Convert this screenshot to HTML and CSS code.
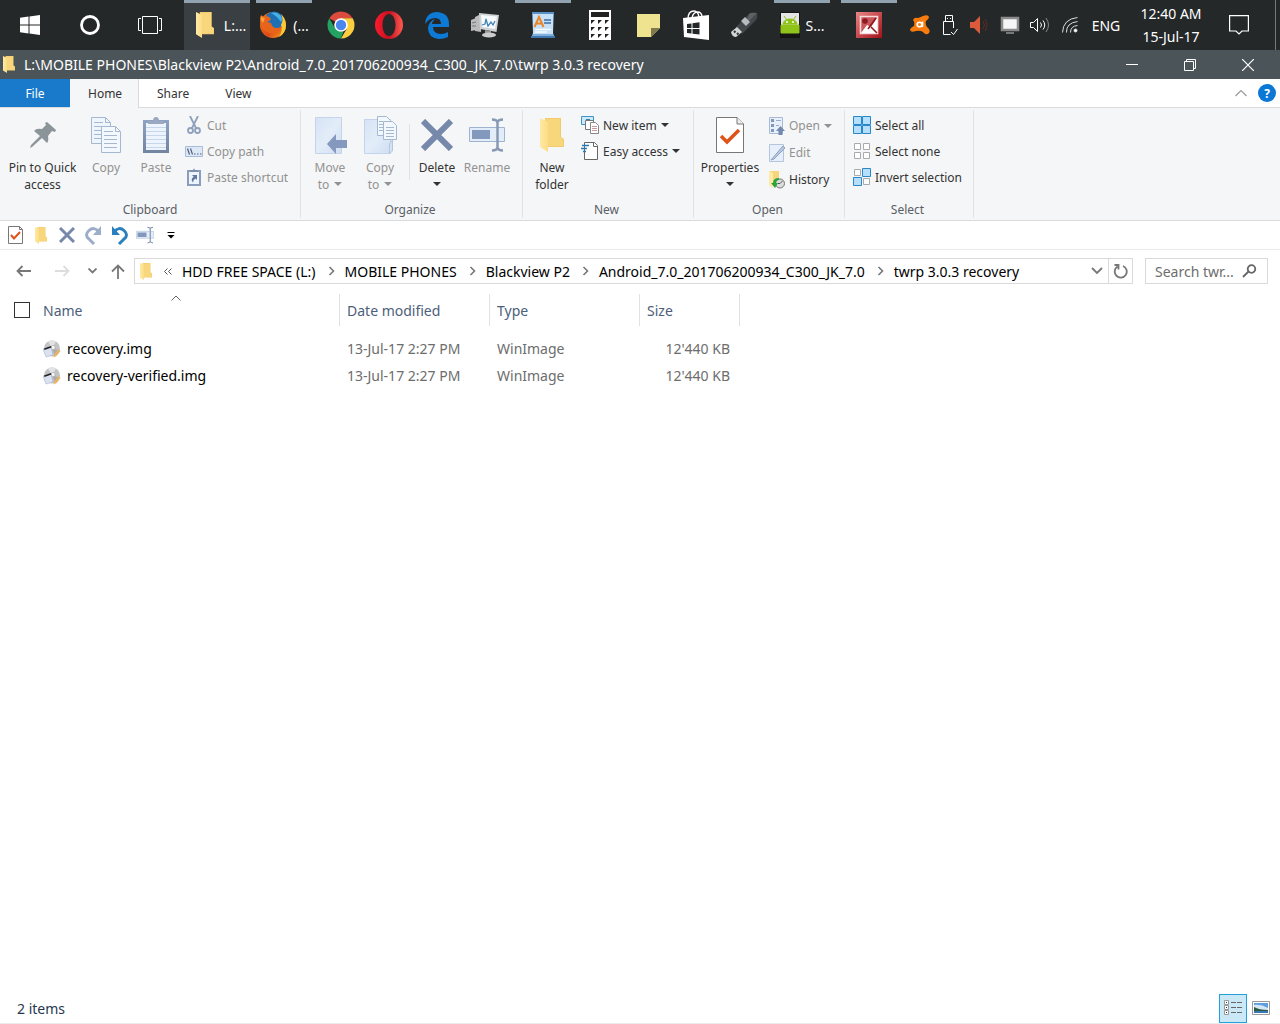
FILE: index.html
```html
<!DOCTYPE html>
<html lang="en">
<head>
  <meta charset="utf-8">
  <title>twrp 3.0.3 recovery</title>
  <link rel="stylesheet" href="styles.css">
</head>
<body>
  <!-- shared icons -->
  <svg class="defs" width="0" height="0">
    <defs>
      <linearGradient id="gFlap" x1="0" x2="1"><stop offset="0" stop-color="#ffe9a6"/><stop offset="1" stop-color="#fbdd85"/></linearGradient>
      <linearGradient id="gBlue" x1="0" x2="1" y2="1"><stop offset="0" stop-color="#d6e3f5"/><stop offset=".5" stop-color="#e3edf9"/><stop offset="1" stop-color="#cfdef2"/></linearGradient>
      <linearGradient id="gOpera" x1="0" x2="1"><stop offset="0" stop-color="#ff1b2d"/><stop offset=".5" stop-color="#c4101f"/><stop offset="1" stop-color="#ff5a50"/></linearGradient>
      <linearGradient id="gFox" x1="0" x2="1" y2="1"><stop offset="0" stop-color="#f27a1d"/><stop offset=".6" stop-color="#dd4a17"/><stop offset="1" stop-color="#f9b024"/></linearGradient>
      <linearGradient id="gRed" x1="0" x2="1" y2="1"><stop offset="0" stop-color="#e98585"/><stop offset="1" stop-color="#a31119"/></linearGradient>
      <linearGradient id="gClip" x1="0" y1="0" x2="0" y2="1"><stop offset="0" stop-color="#8ea2c4"/><stop offset="1" stop-color="#71849f"/></linearGradient>
    </defs>
    <symbol id="folder" viewBox="0 0 24 34">
      <path d="M5 0h16v19l3 2v8H5z" fill="#f2cb6c"/>
      <path d="M6 1h14v18l3 2v7H6z" fill="#f8d67c"/>
      <path d="M0 0l8 4v30l-8-5z" fill="url(#gFlap)"/>
    </symbol>
    <symbol id="cross" viewBox="0 0 32 32">
      <path d="M2 2l28 28M30 2L2 30" stroke="#7689ab" stroke-width="6" fill="none"/>
    </symbol>
    <symbol id="rename" viewBox="0 0 36 34">
      <path d="M.5 9.500h35v14H.5z" fill="#e3edf9" stroke="#9fb3d0"/>
      <path d="M3 12h18v9H3z" fill="#8398bd"/>
      <path d="M23 1.500q5 0 5.500 3q.5-3 5.500-3M28.500 4v26M23 32.500q5 0 5.500-3q.5 3 5.500 3" fill="none" stroke="#8799b4" stroke-width="2.500"/>
    </symbol>
    <symbol id="props" viewBox="0 0 28 36">
      <path d="M.5.5H21l6.500 6.500v28.500H.5z" fill="#fff" stroke="#777"/>
      <path d="M21 .5V7h6.500" fill="#eee" stroke="#777"/>
      <path d="M5 19l6 6L23 13" fill="none" stroke="#dd5318" stroke-width="3.500"/>
    </symbol>
    <symbol id="props-small" viewBox="0 0 15 18">
      <path d="M.5.500h11l3 3v14H.5z" fill="#fff" stroke="#777"/>
      <path d="M11.500.500v3h3" fill="none" stroke="#777"/>
      <path d="M3 9l3 3.500L12 6" fill="none" stroke="#dd5318" stroke-width="2"/>
    </symbol>
    <symbol id="disc" viewBox="0 0 18 18">
      <circle cx="9" cy="8.500" r="8" fill="#c2c3c5"/>
      <path d="M9 8.500L5 1.500a8 8 0 0 1 8 0z" fill="#e2e3e5"/>
      <path d="M9 8.500l8 2a8 8 0 0 1-5 5z" fill="#aaabaf"/>
      <circle cx="10" cy="7.500" r="2.200" fill="#f4f4f4" stroke="#999" stroke-width=".5"/>
      <path d="M0 9l8-2 2 8-7 2z" fill="#dbe1f0" stroke="#a9b3cb" stroke-width=".6"/>
      <path d="M1 8.500l7-2.500.5 1.500L1.500 10z" fill="#222"/>
      <path d="M15.500 9l2 2-4 5-3 1.500.5-3z" fill="#e6b465"/>
    </symbol>
    <symbol id="chev" viewBox="0 0 8 12">
      <path d="M1.500 2L5.500 6l-4 4" fill="none" stroke="#777" stroke-width="1.600"/>
    </symbol>
  </svg>

  <nav class="taskbar">
    <button class="task wide" aria-label="Start"><svg width="20" height="20" viewBox="0 0 20 20" fill="#fff"><path d="M0 2.800l8.500-1.200v8H0zM9.500 1.500L20 0v9.600H9.500zM0 10.500h8.500v8L0 17.300zM9.500 10.500H20V20L9.500 18.600z"/></svg></button>
    <button class="task wide" aria-label="Cortana"><svg width="20" height="20" viewBox="0 0 20 20"><circle cx="10" cy="10" r="8.500" fill="none" stroke="#fff" stroke-width="2.800"/></svg></button>
    <button class="task wide" aria-label="Task View"><svg width="24" height="20" viewBox="0 0 24 20" fill="none" stroke="#fff"><path d="M4.500 1.500h15v17h-15zM3 3.500H.5v12H3M21 3.500h2.500v12H21"/></svg></button>
    <button class="task running active"><svg width="18" height="26" viewBox="0 0 24 34" preserveAspectRatio="none"><use href="#folder"/></svg><span>L:...</span></button>
    <button class="task running"><svg width="28" height="28" viewBox="0 0 28 28">
      <circle cx="14" cy="14" r="13" fill="url(#gFox)"/>
      <circle cx="15" cy="10" r="9.500" fill="#1f6fb5"/>
      <path d="M12 2q6-2 10 3 2 3 0 6-4-6-10-9z" fill="#45b2e6"/>
      <path d="M22 3q5 5 5 11 0 8-7 12 4-6 2-12 3-5 0-11z" fill="#fbc935"/>
      <path d="M2 4q2 2 5 1 3 0 5 3-1 2-4 3l4 1q1 5 6 5 3 0 5-2-2 7-9 8Q5 22 2 14 0 9 2 4z" fill="#e8641b"/>
      <path d="M2 5q1 2 4 2L4 12q-3-3-2-7z" fill="#f8a13a"/></svg><span>(...</span></button>
    <button class="task" aria-label="Chrome"><svg width="28" height="28" viewBox="0 0 28 28">
      <path d="M14 14L2.300 7.200A13.600 13.600 0 0 1 25.700 7.200H14z" fill="#dd4b3e"/>
      <path d="M14 14V7.200h11.700A13.600 13.600 0 0 1 14 27.600L19.900 17.400z" fill="#fccd3f"/>
      <path d="M2.300 7.200L8.100 17.400 14 20.800l2.500-.5L14 27.600A13.600 13.600 0 0 1 2.300 7.200z" fill="#23a261"/>
      <circle cx="14" cy="14" r="6.800" fill="#fff"/><circle cx="14" cy="14" r="5.200" fill="#4a86ee"/></svg></button>
    <button class="task" aria-label="Opera"><svg width="28" height="28" viewBox="0 0 28 28"><path fill="url(#gOpera)" fill-rule="evenodd" d="M14 0a14 14 0 1 0 0 28a14 14 0 1 0 0-28zM14 3c4 0 6.500 5 6.500 11S18 25 14 25 7.500 20 7.500 14 10 3 14 3z"/></svg></button>
    <button class="task" aria-label="Edge"><svg width="26" height="27" viewBox="0 0 26 27"><path fill="#0d7ad6" d="M1 12Q2 0 13.500 0 25 1 25 12v3H9q0 7 8 7 4 0 7-2v5q-4 2-9 2-11-1-11-11 1-7 7-9-3 3-3 5h9q0-6-6-6Q5 6 1 12z"/></svg></button>
    <button class="task" aria-label="Resource Monitor"><svg width="28" height="26" viewBox="0 0 28 26">
      <path d="M0 8l5-2v12l-5 1zM4 5l6-3v18l-6-1z" fill="#b9bbbd"/><path d="M1 11l4-1M1 14h4" stroke="#777"/>
      <path d="M8 1l20 2-2.500 17L9 17z" fill="#cfd1d2"/><path d="M10 3l16 1.500L24 17l-13-2z" fill="#f6fafd"/>
      <path d="M11 13l3-1 1-5 2 7 3-4 2 3 2-4" fill="none" stroke="#3f83b8" stroke-width="1.300"/>
      <path d="M14 18l6 1v3h-6z" fill="#999"/><ellipse cx="18" cy="23" rx="7" ry="2.500" fill="#ccc"/></svg></button>
    <button class="task running" aria-label="WordPad"><svg width="26" height="28" viewBox="0 0 26 28">
      <path d="M2 1h22l-1 21 2 5H1l2-5z" fill="#7fb1dc"/><path d="M2 1h22v2H2z" fill="#5b92c6"/><path d="M1 25h24v2H1z" fill="#3f77b0"/><path d="M3 3h20v20H3z" fill="#c9e1f6"/>
      <path d="M4.500 16L9 6l4.500 10M6 12.500h6" fill="none" stroke="#e98527" stroke-width="2"/>
      <path d="M14 9h7M14 12h7" stroke="#3b6fa7" stroke-width="1.600"/><path d="M5 18.500h16M5 21h12" stroke="#f5fbff" stroke-width="1.600"/></svg></button>
    <button class="task" aria-label="Calculator"><svg width="22" height="30" viewBox="0 0 22 30"><path d="M0 0h22v30H0z" fill="#fff"/><path d="M2 2h18v5H2zM2 10h4l-4 4zM9 10h4l-4 4zM16 10h4l-4 4zM2 17h4l-4 4zM9 17h4l-4 4zM16 17h4l-4 4zM2 24h4l-4 4zM9 24h4l-4 4zM16 24h4l-4 4z" fill="#222"/></svg></button>
    <button class="task" aria-label="Sticky Notes"><svg width="23" height="23" viewBox="0 0 23 23"><path d="M0 0h23v14l-9 9H0z" fill="#f0e38f"/><path d="M14 14h9l-9 9z" fill="#807950"/></svg></button>
    <button class="task" aria-label="Store"><svg width="26" height="30" viewBox="0 0 26 30"><path d="M0 8l26-3v25L1 27z" fill="#fff"/><path d="M5 9q0-8 6-8 4 0 5 6M9 8q1-6 6-6 3 0 4 4" fill="none" stroke="#fff" stroke-width="1.400"/><path d="M4 14l4.500-.6v4.600H4zM9.500 13.200l7-1v5.800h-7zM4 19h4.500v4.600L4 23zM9.500 19h7v5.500l-7-.8z" fill="#242829"/></svg></button>
    <button class="task" aria-label="USB drive"><svg width="28" height="26" viewBox="0 0 28 26"><path d="M6 15L19 2q2-2 8-1 1 5-1 7L12 22z" fill="#44474c"/><path d="M19 2q2-2 8-1L15 13z" fill="#5d6166"/><path d="M11 9l4-4 5 5-4 4z" fill="#b9bbbd"/><path d="M1 20l6-5 5 5-6 5q-4 0-5-5z" fill="#d4d5d6"/><path d="M4 20.500l1.500-1.500M7 22.500L8.500 21" stroke="#333" stroke-width="2"/></svg></button>
    <button class="task running"><svg width="20" height="26" viewBox="0 0 20 26"><path d="M0 0h20v26H0z" fill="#151515"/><path d="M1 1h18v12H1z" fill="#e5e5e5"/><path d="M1 13h18v8H1zM3 12q1-5 7-5t7 5zM4 4l3 4M16 4l-3 4" fill="#8fc31a" stroke="#8fc31a"/><circle cx="7" cy="10" r="1" fill="#fff"/><circle cx="13" cy="10" r="1" fill="#fff"/></svg><span>S...</span></button>
    <button class="task running" aria-label="Image viewer"><svg width="26" height="26" viewBox="0 0 26 26"><path d="M0 0h26v26H0z" fill="url(#gRed)"/><path d="M4.500 4.500h17v17h-17z" fill="#c9575c" stroke="#f7dcdc" stroke-width="1.600"/><path d="M5 21l6-8 4 2 6-9v15z" fill="#fff"/><path d="M12 17l8-11M15 15l6 6" stroke="#8d1b20" stroke-width="1.600"/><circle cx="9" cy="9" r="2.800" fill="#8d1b20"/></svg></button>

    <div class="tray">
      <button class="tray-btn" aria-label="Avast"><svg width="20" height="20" viewBox="0 0 20 20"><path d="M8 3q3-1 5-2 5-2 6 1 0 2-3 4-1 3 1 6 4 3 2 6-3 3-6-1-3-2-7-1-5 2-6-1 0-2 4-4 1-4-1-6 1-3 5-2z" fill="#f77c0d"/><circle cx="9.500" cy="9.500" r="2.300" fill="none" stroke="#fff" stroke-width="1.600"/><path d="M12.500 6.500V12" stroke="#fff" stroke-width="1.600"/></svg></button>
      <button class="tray-btn" aria-label="Eject"><svg width="16" height="21" viewBox="0 0 16 21" fill="none" stroke="#fff"><path d="M3.500 6.500v-6h7v6M11.500 13V6.500h-10v13h7M5 3.500h1M8 3.500h1M9 17l2.500 2.500L15.500 14"/></svg></button>
      <button class="tray-btn" aria-label="Sound manager"><svg width="20" height="20" viewBox="0 0 20 20"><path d="M0 7h4l6-6v18l-6-6H0z" fill="#db5a3c"/><path d="M13 6q3 4 0 8M15 4q4 6 0 12" fill="none" stroke="#5e2b24"/></svg></button>
      <button class="tray-btn" aria-label="Display"><svg width="20" height="18" viewBox="0 0 20 18"><path d="M2 2h16v12H2z" fill="#f6f6f6" stroke="#8b8b8b" stroke-width="2.500"/><path d="M6 16h8v2H6z" fill="#777"/></svg></button>
      <button class="tray-btn" aria-label="Volume"><svg width="20" height="16" viewBox="0 0 20 16" fill="none" stroke="#fff"><path d="M.5 5.500h3l4-4v13l-4-4h-3zM10.500 5.500q2 2.500 0 5M13 3.500q3.500 4.500 0 9"/><path d="M16 1q5 7 0 14" stroke="#888"/></svg></button>
      <button class="tray-btn" aria-label="Network"><svg width="16" height="16" viewBox="0 0 16 16" fill="none" stroke="#ddd"><path d="M.5 15.500Q1 2 15.500.5M4.500 15.500Q4 6 15.500 4.500M8.500 15.500q0-6.500 7-7"/><circle cx="13.500" cy="13.500" r="1.500" fill="#fff"/></svg></button>
      <button class="tray-btn lang">ENG</button>
      <button class="clock"><span>12:40 AM</span><span>15-Jul-17</span></button>
      <button class="notify" aria-label="Notifications"><svg width="20" height="20" viewBox="0 0 20 20" fill="none" stroke="#fff" stroke-width="1.200"><path d="M.6.600h18.800v15.400H13l-3 3-3-3H.6z"/></svg></button>
    </div>
  </nav>

  <header class="titlebar">
    <svg width="12" height="17" viewBox="0 0 24 34"><use href="#folder"/></svg>
    <h1>L:\MOBILE PHONES\Blackview P2\Android_7.0_201706200934_C300_JK_7.0\twrp 3.0.3 recovery</h1>
    <div class="win-controls">
      <button aria-label="Minimize"><svg width="12" height="12" viewBox="0 0 12 12"><path d="M0 5.500h12" stroke="#fff"/></svg></button>
      <button aria-label="Restore"><svg width="12" height="12" viewBox="0 0 12 12" fill="none" stroke="#fff"><path d="M.5 2.500h9v9h-9zM2.500 2.500v-2h9v9h-2"/></svg></button>
      <button aria-label="Close"><svg width="12" height="12" viewBox="0 0 12 12" stroke="#fff" stroke-width="1.200"><path d="M0 0l12 12M12 0L0 12"/></svg></button>
    </div>
  </header>

  <div class="tabs">
    <button class="tab file">File</button>
    <button class="tab current">Home</button>
    <button class="tab">Share</button>
    <button class="tab">View</button>
    <button class="collapse" aria-label="Collapse ribbon"><svg width="12" height="8" viewBox="0 0 12 8"><path d="M.5 7L6 1.500 11.500 7" fill="none" stroke="#999" stroke-width="1.200"/></svg></button>
    <button class="help" aria-label="Help">?</button>
  </div>

  <div class="ribbon">
    <section class="group clipboard">
      <div class="tools">
        <button class="big pin"><span class="pic"><svg width="26" height="26" viewBox="0 0 26 26" fill="#8b9599"><path d="M17 0l9 8-1 2-3-1-4 5q1 5-1 7l-5-5-10 9-2 1 1-3 9-9-6-5q2-3 8-2l4-4-1-2z"/></svg></span>Pin to Quick<br>access</button>
        <button class="big" disabled><span class="pic"><svg width="30" height="36" viewBox="0 0 30 36" stroke="#a6b7d0"><path d="M.5.500h14l5 5v21H.5z" fill="#eff5fd"/><path d="M14.500.500v5h5M3 5.500h9M3 9.500h13M3 13.500h13M3 17.500h13M3 21.500h13" fill="none"/><path d="M10.500 9.500h14l5 5v21h-19z" fill="#f3f8fe"/><path d="M24.500 9.500v5h5M13 14.500h9M13 18.500h13M13 22.500h13M13 26.500h13M13 30.500h13" fill="none"/></svg></span>Copy</button>
        <button class="big" disabled><span class="pic"><svg width="26" height="36" viewBox="0 0 26 36"><path d="M0 3h26v33H0z" fill="url(#gClip)"/><path d="M3 6h20v27H3z" fill="#edf4fd"/><path d="M3 10.500h20M3 14.500h20M3 18.500h20M3 22.500h20M3 26.500h20M3 30.500h20" stroke="#c6d6ec"/><path d="M5 7V4h5q0-4 3-4t3 4h5v3z" fill="#9aa9c0"/></svg></span>Paste</button>
        <div class="small-list">
          <button class="small" disabled><svg width="18" height="18" viewBox="0 0 18 18" fill="none" stroke="#8fa0bc" stroke-width="1.800"><path d="M5 0l6 12M13 0L7 12"/><circle cx="5.500" cy="14.500" r="2.500"/><circle cx="12.500" cy="14.500" r="2.500"/></svg>Cut</button>
          <button class="small" disabled><svg width="18" height="18" viewBox="0 0 18 18"><path d="M.5 4.500h17v10H.5z" fill="#dde8f7" stroke="#a9bcd8"/><path d="M2.500 6.500l2 6M5.500 6.500l2 6M9 12h1.500M12 12h1.500M15 12h1.500" stroke="#53617a" stroke-width="1.200"/></svg>Copy path</button>
          <button class="small" disabled><svg width="18" height="18" viewBox="0 0 18 18"><path d="M2 2h14v16H2z" fill="#8b9dbd"/><path d="M4 4h10v12H4z" fill="#edf4fd"/><path d="M5 4V2h3q1-3 2 0h3v2z" fill="#7f90ad"/><path d="M7 7h5v5l-1.500-1.500Q8 12 8 14.500 5 11 8.700 8.700z" fill="#6479a0"/></svg>Paste shortcut</button>
        </div>
      </div>
      <h2>Clipboard</h2>
    </section>

    <section class="group organize">
      <div class="tools">
        <button class="big" disabled><span class="pic"><svg width="34" height="38" viewBox="0 0 34 38"><path d="M2.500 1.500h26v36h-26z" fill="url(#gBlue)" stroke="#c4d4ea"/><path d="M14 28l9-10v6h11v8H23v6z" fill="#8499bd"/></svg></span>Move<br>to <i class="caret"></i></button>
        <button class="big" disabled><span class="pic"><svg width="34" height="38" viewBox="0 0 34 38"><path d="M1.500 3.500h26v34h-26z" fill="url(#gBlue)" stroke="#c4d4ea"/><path d="M26.500 37.500V28l3-4v11z" fill="#d5e2f4" stroke="#b5c7e0"/><path d="M14.500.500h9l4 4v15h-13z" fill="#f3f8fe" stroke="#a6b7d0"/><path d="M16 5.500h4M16 8.500h4M16 11.500h4M16 14.500h4" stroke="#a6b7d0"/><path d="M20.500 5.500h9l4 4v14h-13z" fill="#f3f8fe" stroke="#a6b7d0"/><path d="M23 11.500h8M23 14.500h8M23 17.500h8M23 20.500h8" stroke="#a6b7d0"/></svg></span>Copy<br>to <i class="caret"></i></button>
        <span class="rule"></span>
        <button class="big"><span class="pic"><svg width="32" height="32"><use href="#cross"/></svg></span>Delete<br><i class="caret down"></i></button>
        <button class="big" disabled><span class="pic"><svg width="36" height="34"><use href="#rename"/></svg></span>Rename</button>
      </div>
      <h2>Organize</h2>
    </section>

    <section class="group new">
      <div class="tools">
        <button class="big"><span class="pic"><svg width="24" height="34"><use href="#folder"/></svg></span>New<br>folder</button>
        <div class="small-list">
          <button class="small"><svg width="18" height="18" viewBox="0 0 18 18"><path d="M.5.500h12v8H.5z" fill="#cce8fa" stroke="#3e95c4"/><path d="M5 3h4v4H5z" fill="#3382ae"/><path d="M4.500 4.500h8v9h-8z" fill="#fff" stroke="#777"/><path d="M9.500 6.500h5l3 3v8h-8z" fill="#fff" stroke="#888"/><path d="M11 10.500h5M11 12.500h5M11 14.500h5" stroke="#cc98a0"/></svg>New item <i class="caret"></i></button>
          <button class="small"><svg width="18" height="18" viewBox="0 0 18 18"><path d="M3.500.500h10l3 3v14h-13z" fill="#fff" stroke="#666"/><path d="M12.500.500v4h4" fill="none" stroke="#666"/><path d="M1 3.500h7M0 6.500h6M2 9.500h3" stroke="#2979b5" stroke-width="1.400"/></svg>Easy access <i class="caret"></i></button>
        </div>
      </div>
      <h2>New</h2>
    </section>

    <section class="group open">
      <div class="tools">
        <button class="big props"><span class="pic"><svg width="28" height="36"><use href="#props"/></svg></span>Properties<br><i class="caret down"></i></button>
        <div class="small-list loose">
          <button class="small" disabled><svg width="16" height="18" viewBox="0 0 16 18"><path d="M.5.500h13v16H.5z" fill="#e7effa" stroke="#a9bad3"/><path d="M2 2h3v3H2zM2 7h3v3H2zM2 12h3v3H2z" fill="#8397ba"/><path d="M7 3.500h5M7 8.500h3" stroke="#9bacc8"/><path d="M7 14l4.500-5 4.500 5h-2.500v4h-4v-4z" fill="#7589ad"/></svg>Open <i class="caret"></i></button>
          <button class="small" disabled><svg width="16" height="18" viewBox="0 0 16 18"><path d="M.5.500h14v17H.5z" fill="#e7effa" stroke="#b4c4dc"/><path d="M2 16L14 2l2 2L5 15z" fill="#b8c8df" stroke="#8fa2c1"/></svg>Edit</button>
          <button class="small"><svg width="16" height="18" viewBox="0 0 16 18"><path d="M0 0h10v15H3l-3-1z" fill="#f6d57d"/><path d="M0 0l4 2v15l-4-3z" fill="#ffe9a6"/><circle cx="11" cy="12.500" r="4.500" fill="#ddd" stroke="#777"/><path d="M11 12.500l2.500-2.500M11 12.500H9" stroke="#555"/><path d="M10 7Q4 7 4 12H2l4 5 3-5H7q0-3 3-3z" fill="#2aa53a"/></svg>History</button>
        </div>
      </div>
      <h2>Open</h2>
    </section>

    <section class="group select">
      <div class="tools">
        <div class="small-list">
          <button class="small"><svg width="18" height="18" viewBox="0 0 18 18" fill="#b5dffc" stroke="#2b88c8"><path d="M.5.500h8v8h-8zM9.500.500h8v8h-8zM.5 9.500h8v8h-8zM9.500 9.500h8v8h-8z"/></svg>Select all</button>
          <button class="small"><svg width="18" height="18" viewBox="0 0 18 18" fill="#fff" stroke="#aaa"><path d="M1.500 1.500h6v6h-6zM10.500 1.500h6v6h-6zM1.500 10.500h6v6h-6zM10.500 10.500h6v6h-6z"/></svg>Select none</button>
          <button class="small"><svg width="18" height="18" viewBox="0 0 18 18"><path d="M1.500 1.500h6v6h-6zM10.500 10.500h6v6h-6z" fill="#fff" stroke="#aaa"/><path d="M9.500.500h8v8h-8zM.5 9.500h8v8h-8z" fill="#b5dffc" stroke="#2b88c8"/></svg>Invert selection</button>
        </div>
      </div>
      <h2>Select</h2>
    </section>
  </div>

  <div class="quickbar">
    <button aria-label="Properties"><svg width="15" height="18"><use href="#props-small"/></svg></button>
    <button aria-label="New folder"><svg width="12" height="17"><use href="#folder"/></svg></button>
    <button aria-label="Delete"><svg width="16" height="16"><use href="#cross"/></svg></button>
    <button aria-label="Redo"><svg width="17" height="19" viewBox="0 0 17 19"><path d="M14 6Q9 0 4 4.500T4 13l5 5" fill="none" stroke="#9cadc9" stroke-width="3"/><path d="M16 0v9H8z" fill="#9cadc9"/></svg></button>
    <button aria-label="Undo"><svg width="17" height="19" viewBox="0 0 17 19"><path d="M3 6q5-6 10-1.500T13 13l-5 5" fill="none" stroke="#2980be" stroke-width="3"/><path d="M1 0v9h8z" fill="#2980be"/></svg></button>
    <button aria-label="Rename"><svg width="18" height="18"><use href="#rename"/></svg></button>
    <button aria-label="Customize"><svg width="8" height="8" viewBox="0 0 8 8"><path d="M.5 1.500h7" stroke="#000"/><path d="M.5 4h7L4 7.500z"/></svg></button>
  </div>

  <div class="navbar">
    <button class="back" aria-label="Back"><svg width="15" height="12" viewBox="0 0 15 12" fill="none" stroke="#777" stroke-width="1.800"><path d="M15 6H1.500M6.500 1l-5 5 5 5"/></svg></button>
    <button class="forward" aria-label="Forward"><svg width="15" height="12" viewBox="0 0 15 12" fill="none" stroke="#ddd" stroke-width="1.800"><path d="M0 6h13.500M8.500 1l5 5-5 5"/></svg></button>
    <button class="recent" aria-label="Recent"><svg width="9" height="6" viewBox="0 0 9 6" fill="none" stroke="#777" stroke-width="1.800"><path d="M.5.500l4 4 4-4"/></svg></button>
    <button class="up-dir" aria-label="Up"><svg width="14" height="15" viewBox="0 0 14 15" fill="none" stroke="#777" stroke-width="1.800"><path d="M7 15V1.500M1 7.500l6-6 6 6"/></svg></button>
    <div class="address">
      <svg width="12" height="17" viewBox="0 0 24 34"><use href="#folder"/></svg>
      <svg class="more" width="8" height="7" viewBox="0 0 8 7" fill="none" stroke="#555"><path d="M3.500.500l-3 3 3 3M7.500.500l-3 3 3 3"/></svg>
      <button>HDD FREE SPACE (L:)</button>
      <svg class="sep" width="8" height="12"><use href="#chev"/></svg>
      <button>MOBILE PHONES</button>
      <svg class="sep" width="8" height="12"><use href="#chev"/></svg>
      <button>Blackview P2</button>
      <svg class="sep" width="8" height="12"><use href="#chev"/></svg>
      <button>Android_7.0_201706200934_C300_JK_7.0</button>
      <svg class="sep" width="8" height="12"><use href="#chev"/></svg>
      <button>twrp 3.0.3 recovery</button>
      <button class="drop" aria-label="Previous locations"><svg width="12" height="8" viewBox="0 0 12 8" fill="none" stroke="#777" stroke-width="1.800"><path d="M1 1l5 5 5-5"/></svg></button>
      <button class="refresh" aria-label="Refresh"><svg width="15" height="16" viewBox="0 0 15 16" fill="none" stroke="#777" stroke-width="1.800"><path d="M10 3a6 6 0 1 1-5.500.500M1.500 2h4v4.500"/></svg></button>
    </div>
    <label class="search">
      <input type="text" placeholder="Search twr..." aria-label="Search">
      <svg width="15" height="14" viewBox="0 0 15 14" fill="none" stroke="#666" stroke-width="1.800"><circle cx="9.500" cy="5" r="3.800"/><path d="M6.500 7.500L1 13"/></svg>
    </label>
  </div>

  <main>
    <table class="files">
      <thead>
        <tr>
          <th class="name"><div class="name-head"><input type="checkbox" aria-label="Select all items"><span>Name</span><svg class="sort" width="10" height="6" viewBox="0 0 10 6"><path d="M.5 5.500L5 1l4.500 4.500" fill="none" stroke="#666"/></svg></div></th>
          <th class="date">Date modified</th>
          <th class="type">Type</th>
          <th class="size">Size</th>
        </tr>
      </thead>
      <tbody>
        <tr>
          <td><div class="entry"><svg width="18" height="18"><use href="#disc"/></svg>recovery.img</div></td>
          <td>13-Jul-17 2:27 PM</td>
          <td>WinImage</td>
          <td>12'440 KB</td>
        </tr>
        <tr>
          <td><div class="entry"><svg width="18" height="18"><use href="#disc"/></svg>recovery-verified.img</div></td>
          <td>13-Jul-17 2:27 PM</td>
          <td>WinImage</td>
          <td>12'440 KB</td>
        </tr>
      </tbody>
    </table>
  </main>

  <footer class="status">
    <span class="count">2 items</span>
    <button class="view on" aria-label="Details view"><svg width="18" height="16" viewBox="0 0 18 16" fill="#fff"><path d="M.5.500h4v4h-4zM.5 5.500h4v4h-4zM.5 10.500h4v4h-4z" stroke="#999"/><path d="M2 2h1v1H2zM2 7h1v1H2zM2 12h1v1H2z" fill="#333"/><path d="M7 2.500h5M13 2.500h5M7 7.500h5M13 7.500h5M7 12.500h5M13 12.500h5" stroke="#666"/></svg></button>
    <button class="view" aria-label="Thumbnail view"><svg width="18" height="14" viewBox="0 0 18 14"><path d="M.5.500h17v13H.5z" fill="#fff" stroke="#999"/><path d="M2 2h14v10H2z" fill="#5f9fe0"/><path d="M2 4q7-1 14 3v2H2z" fill="#d5e7f2"/><path d="M2 6q5 3 14 3v1H2z" fill="#2b5a3f"/><path d="M2 10h14v2H2z" fill="#3878b5"/></svg></button>
  </footer>
</body>
</html>
```

FILE: styles.css
```css
* {
  box-sizing: border-box;
}
body {
  margin: 0;
  min-height: 100vh;
  display: flex;
  flex-direction: column;
  font-family: "Noto Sans", "Open Sans", sans-serif;
  font-size: 14px;
  color: #000;
  background-color: #fff;
}
button {
  font: inherit;
  color: inherit;
  background: none;
  border: none;
  padding: 0;
  white-space: nowrap;
}
svg {
  display: block;
  flex-shrink: 0;
}
.defs {
  position: absolute;
}

/* taskbar */
.taskbar {
  display: flex;
  height: 50px;
  background-color: #242829;
  color: #fff;
}
.task {
  width: 48px;
  display: flex;
  align-items: center;
  justify-content: center;
}
.task.wide {
  width: 60px;
}
.task.running {
  width: 56px;
  margin: 0 5px 0 6px;
  border-top: 3px solid #91a3b0;
  padding-bottom: 3px;
  gap: 6px;
}
.task.active {
  width: 66px;
  margin: 0 0 0 4px;
  padding-left: 8px;
  gap: 10px;
  background-color: #3a3f44;
}
.tray {
  margin-left: auto;
  margin-right: 4px;
  padding-right: 26px;
  border-right: 1px solid #777;
  display: flex;
  align-items: center;
}
.tray-btn {
  width: 30px;
  display: flex;
  justify-content: center;
}
.tray-btn.lang {
  width: 42px;
}
.clock {
  width: 88px;
  line-height: 23px;
}
.clock span {
  display: block;
}
.notify {
  margin-left: 14px;
}

/* title bar */
.titlebar {
  display: flex;
  align-items: center;
  height: 29px;
  padding-left: 3px;
  background-color: #4b5459;
  color: #fff;
}
.titlebar h1 {
  flex: 1;
  margin: 0 0 0 9px;
  font-size: 14px;
  font-weight: normal;
  white-space: nowrap;
}
.win-controls {
  display: flex;
  padding-right: 3px;
}
.win-controls button {
  width: 58px;
  display: flex;
  justify-content: center;
}

/* ribbon tabs */
.tabs {
  display: flex;
  align-items: center;
  height: 29px;
  font-size: 12px;
  color: #333;
  border-bottom: 1px solid #dadbdc;
}
.tab {
  height: 28px;
  padding: 0 18px;
}
.tab.file {
  width: 70px;
  background-color: #1979ca;
  color: #fff;
}
.tab.current {
  width: 69px;
  height: 29px;
  margin-bottom: -1px;
  background-color: #f5f6f7;
  border-right: 1px solid #dadbdc;
}
.collapse {
  margin-left: auto;
}
.help {
  width: 18px;
  height: 18px;
  margin: 0 4px 0 11px;
  border-radius: 50%;
  background-color: #0a78d4;
  color: #fff;
  font-weight: bold;
}

/* ribbon */
.ribbon {
  display: flex;
  padding: 2px 0;
  background-color: #f5f6f7;
  border-bottom: 1px solid #dadbdc;
  font-size: 12px;
  color: #333;
}
.group {
  padding: 2px 7px 0 4px;
  border-right: 1px solid #e0e2e4;
}
.group h2 {
  margin: 0;
  font-size: 12px;
  line-height: 17px;
  font-weight: normal;
  text-align: center;
  color: #5a5f66;
}
.tools {
  display: flex;
  align-items: flex-start;
  min-height: 89px;
}
.clipboard {
  min-width: 301px;
  padding-right: 4px;
}
.organize {
  min-width: 222px;
}
.new {
  min-width: 171px;
}
.open {
  min-width: 151px;
}
.select {
  min-width: 129px;
}
.big {
  width: 50px;
  padding-top: 3px;
  line-height: 17px;
}
.big.pin {
  width: 77px;
}
.big.props {
  width: 64px;
}
.pic {
  height: 44px;
  display: flex;
  align-items: center;
  justify-content: center;
  padding-bottom: 4px;
}
.ribbon button:disabled {
  color: #929292;
}
.small-list {
  margin-left: 4px;
  display: flex;
  flex-direction: column;
}
.small {
  display: flex;
  align-items: center;
  gap: 4px;
  height: 26px;
}
.small-list.loose {
  margin-left: 7px;
}
.loose .small {
  height: 27px;
}
.caret {
  display: inline-block;
  vertical-align: 3px;
  margin-left: 2px;
  border: 4px solid transparent;
  border-top-color: currentColor;
  border-bottom: none;
}
.small .caret {
  margin-left: 0;
}
.caret.down {
  margin-left: 0;
}
.rule {
  width: 1px;
  height: 56px;
  margin: 12px 2px 0 4px;
  background-color: #e0e2e4;
}

/* quick access */
.quickbar {
  display: flex;
  align-items: center;
  height: 29px;
  padding-left: 2px;
  border-bottom: 1px solid #ebebeb;
}
.quickbar button {
  width: 26px;
  display: flex;
  justify-content: center;
}

/* address row */
.navbar {
  display: flex;
  align-items: center;
  padding: 8px 12px 6px 16px;
}
.forward {
  margin-left: 24px;
}
.recent {
  margin-left: 18px;
}
.up-dir {
  margin: 0 9px 0 14px;
}
.address {
  flex: 1;
  display: flex;
  align-items: center;
  height: 26px;
  border: 1px solid #d9d9d9;
  padding-left: 5px;
}
.more {
  margin: 0 10px 0 12px;
}
.sep {
  margin: 0 9px 0 12px;
}
.drop {
  margin-left: auto;
}
.refresh {
  width: 24px;
  height: 24px;
  margin-left: 5px;
  display: flex;
  align-items: center;
  justify-content: center;
  border-left: 1px solid #d9d9d9;
}
.search {
  width: 123px;
  height: 26px;
  margin-left: 12px;
  padding: 0 10px 0 9px;
  display: flex;
  align-items: center;
  border: 1px solid #d9d9d9;
}
.search input {
  flex: 1;
  min-width: 0;
  padding: 0;
  border: none;
  outline: none;
  font: inherit;
}
.search input::placeholder {
  color: #6d6d6d;
}

/* file list */
main {
  flex: 1;
  padding-top: 4px;
}
.files {
  border-collapse: separate;
  border-spacing: 0;
  table-layout: fixed;
  width: 740px;
}
.files th {
  height: 32px;
  padding: 0 7px;
  text-align: left;
  font-weight: normal;
  color: #4c607a;
  border-right: 1px solid #e2e2e2;
}
.files th.name {
  width: 340px;
  padding: 0 0 0 14px;
}
.date,
.type {
  width: 150px;
}
.size {
  width: 100px;
}
.name-head {
  position: relative;
  display: flex;
  align-items: center;
  gap: 13px;
}
.name-head input {
  appearance: none;
  width: 16px;
  height: 16px;
  margin: 0;
  border: 1px solid #333;
}
.sort {
  position: absolute;
  left: 157px;
  top: -6px;
}
.files tbody::before {
  content: "";
  display: block;
  height: 9px;
}
.files td {
  height: 27px;
  padding: 0 7px;
  color: #6d6d6d;
}
.files td:first-child {
  padding-left: 43px;
  color: #000;
}
.files td:last-child {
  text-align: right;
  padding-right: 10px;
}
.entry {
  display: flex;
  align-items: center;
  gap: 6px;
}

/* status bar */
.status {
  display: flex;
  align-items: center;
  height: 31px;
  padding: 0 5px 0 17px;
  border-bottom: 1px solid #ebebeb;
  color: #26374f;
}
.count {
  flex: 1;
}
.view {
  width: 28px;
  height: 29px;
  display: flex;
  align-items: center;
  justify-content: center;
}
.view.on {
  background-color: #cbe8f6;
  border: 1px solid #26a0da;
}
```
